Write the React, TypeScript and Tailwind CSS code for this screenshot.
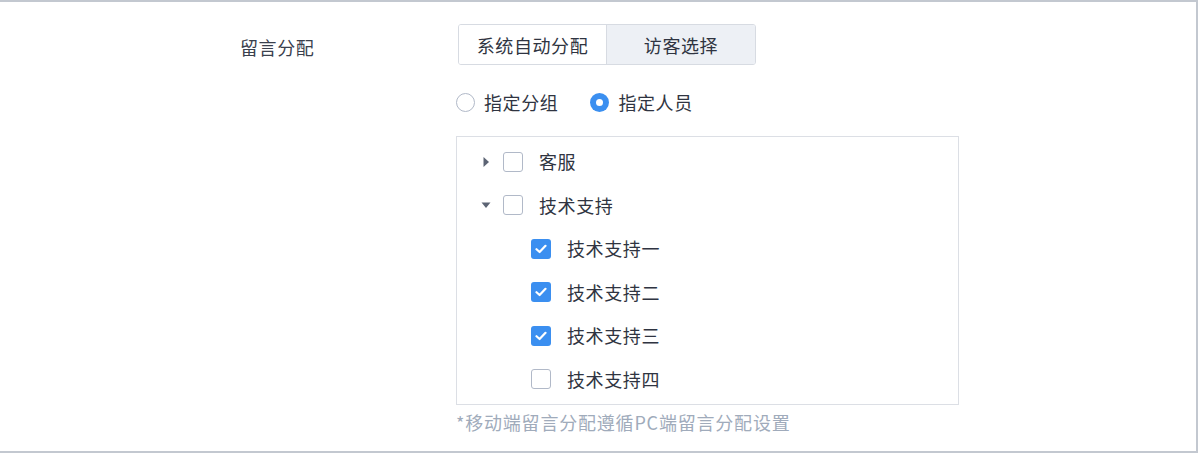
import React, { useState } from 'react';

type Node = { id: string; label: string; checked?: boolean; children?: Node[]; open?: boolean };

const TREE: Node[] = [
  { id: 'kf', label: '客服', open: false, children: [] },
  {
    id: 'js',
    label: '技术支持',
    open: true,
    children: [
      { id: 'js1', label: '技术支持一', checked: true },
      { id: 'js2', label: '技术支持二', checked: true },
      { id: 'js3', label: '技术支持三', checked: true },
      { id: 'js4', label: '技术支持四', checked: false },
    ],
  },
];

const Checkbox = ({ checked }: { checked?: boolean }) =>
  checked ? (
    <span className="w-[20px] h-[20px] rounded-[3px] bg-[#3b8ff0] flex items-center justify-center shrink-0">
      <svg width="12" height="10" viewBox="0 0 12 10" fill="none">
        <path d="M1.5 5.2 L4.6 8 L10.5 1.8" stroke="white" strokeWidth="2.2" strokeLinecap="round" strokeLinejoin="round" />
      </svg>
    </span>
  ) : (
    <span className="block w-[20px] h-[20px] rounded-[3px] border-[1.5px] border-[#b1b9c8] bg-white shrink-0" />
  );

const Radio = ({ checked }: { checked?: boolean }) =>
  checked ? (
    <span className="w-[19px] h-[19px] rounded-full bg-[#3b8ff0] flex items-center justify-center shrink-0">
      <span className="w-[7px] h-[7px] rounded-full bg-white" />
    </span>
  ) : (
    <span className="block w-[19px] h-[19px] rounded-full border-[1.5px] border-[#b1b9c8] bg-white shrink-0" />
  );

const Caret = ({ open }: { open?: boolean }) => (
  <svg width="10" height="10" viewBox="0 0 10 10" className="shrink-0">
    {open ? <path d="M0.5 2.5 H9.5 L5 8 Z" fill="#5c6474" /> : <path d="M2.5 0 V10 L8 5 Z" fill="#5c6474" />}
  </svg>
);

export default function App() {
  const [mode, setMode] = useState<'auto' | 'visitor'>('visitor');
  const [target, setTarget] = useState<'group' | 'person'>('person');

  return (
    <div
      className="w-[1198px] h-[453px] bg-white border-t-2 border-r-2 border-b-2 border-[#c3c8d0] flex text-[18px] text-[#2f3441] tracking-[0.6px]"
      style={{ fontFamily: '"Noto Sans CJK SC", "Noto Sans", sans-serif' }}
    >
      <div className="w-[458px] pl-[240px] pt-[27px] text-[#3a404d] leading-[36px]">留言分配</div>

      <div className="flex flex-col pt-[22px]">
        <div className="flex h-[41px] w-[298px] border border-[#d7dbe2] rounded-[3px] overflow-hidden">
          <button
            onClick={() => setMode('auto')}
            className={`w-[148px] border-r border-[#d7dbe2] leading-none ${mode === 'auto' ? 'bg-[#edf0f5]' : 'bg-white'}`}
          >
            系统自动分配
          </button>
          <button
            onClick={() => setMode('visitor')}
            className={`flex-1 leading-none ${mode === 'visitor' ? 'bg-[#edf0f5]' : 'bg-white'}`}
          >
            访客选择
          </button>
        </div>

        <div className="flex items-center h-[36px] mt-[19px] -ml-[2px]">
          <button onClick={() => setTarget('group')} className="flex items-center gap-[9px]">
            <Radio checked={target === 'group'} />
            <span>指定分组</span>
          </button>
          <button onClick={() => setTarget('person')} className="flex items-center gap-[9px] ml-[32px]">
            <Radio checked={target === 'person'} />
            <span>指定人员</span>
          </button>
        </div>

        <div className="mt-[16px] -ml-[2px] w-[503px] border border-[#dcdfe5] pt-[3px] pb-[3px]">
          {TREE.map((node) => (
            <div key={node.id}>
              <div className="flex items-center h-[43.5px] pl-[24px]">
                <Caret open={node.open} />
                <span className="ml-[12px] flex"><Checkbox checked={node.checked} /></span>
                <span className="ml-[16px]">{node.label}</span>
              </div>
              {node.open &&
                node.children?.map((c) => (
                  <div key={c.id} className="flex items-center h-[43.5px] pl-[74px]">
                    <Checkbox checked={c.checked} />
                    <span className="ml-[16px]">{c.label}</span>
                  </div>
                ))}
            </div>
          ))}
        </div>

        <div className="-ml-[2px] mt-[2px] text-[#a0abbb] leading-[30px] tracking-[0.8px]">*移动端留言分配遵循PC端留言分配设置</div>
      </div>
    </div>
  );
}
